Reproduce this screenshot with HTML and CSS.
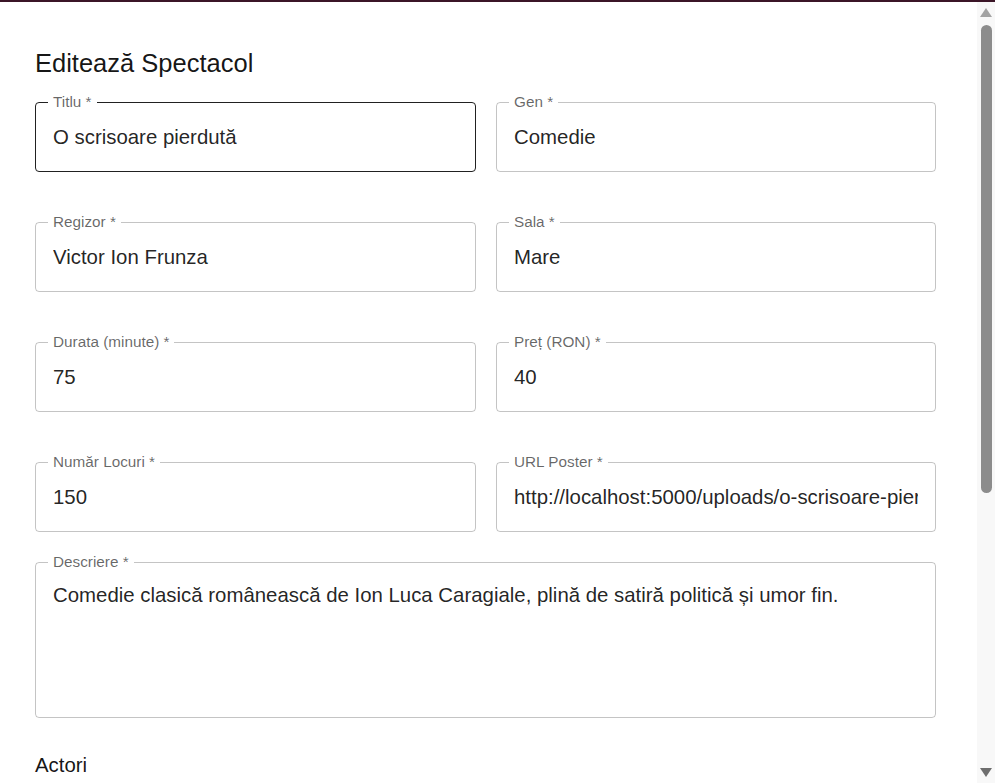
FILE: index.html
```html
<!DOCTYPE html>
<html lang="ro">
<head>
<meta charset="utf-8">
<title>Editează Spectacol</title>
<link rel="stylesheet" href="styles.css">
</head>
<body>
<div class="backdrop-strip"></div>
<div class="dialog">
  <div class="dialog-content">
    <h2 class="title">Editează Spectacol</h2>
    <div class="form-grid">
      <div class="field field-hover">
        <span class="label">Titlu *</span>
        <input class="input" type="text" value="O scrisoare pierdută">
      </div>
      <div class="field">
        <span class="label">Gen *</span>
        <input class="input" type="text" value="Comedie">
      </div>
      <div class="field">
        <span class="label">Regizor *</span>
        <input class="input" type="text" value="Victor Ion Frunza">
      </div>
      <div class="field">
        <span class="label">Sala *</span>
        <input class="input" type="text" value="Mare">
      </div>
      <div class="field">
        <span class="label">Durata (minute) *</span>
        <input class="input" type="text" value="75">
      </div>
      <div class="field">
        <span class="label">Preț (RON) *</span>
        <input class="input" type="text" value="40">
      </div>
      <div class="field">
        <span class="label">Număr Locuri *</span>
        <input class="input" type="text" value="150">
      </div>
      <div class="field">
        <span class="label">URL Poster *</span>
        <input class="input" type="text" value="http://localhost:5000/uploads/o-scrisoare-pierduta.jpg">
      </div>
    </div>
    <div class="field field-multi">
      <span class="label">Descriere *</span>
      <textarea class="textarea" rows="4">Comedie clasică românească de Ion Luca Caragiale, plină de satiră politică și umor fin.</textarea>
    </div>
    <h3 class="section">Actori</h3>
  </div>
  <div class="scrollbar">
    <div class="sb-btn"><span class="arrow-up"></span></div>
    <div class="sb-thumb"></div>
    <div class="sb-space"></div>
    <div class="sb-btn"><span class="arrow-down"></span></div>
  </div>
</div>
</body>
</html>
```
FILE: styles.css
```css
* { box-sizing: border-box; }
html, body {
  margin: 0;
  padding: 0;
  background: #ffffff;
  font-family: "Liberation Sans", Arial, sans-serif;
  color: rgba(0, 0, 0, 0.87);
  overflow: hidden;
}
.backdrop-strip {
  height: 2px;
  background: #3b1527;
}
.dialog {
  display: flex;
  height: 781px;
  background: #ffffff;
}
.dialog-content {
  flex: 1;
  overflow: hidden;
  padding: 45px 41px 0 35px;
}
.title {
  margin: 0;
  font-size: 25.5px;
  font-weight: normal;
  line-height: 32px;
  color: rgba(0, 0, 0, 0.92);
}
.form-grid {
  margin-top: 23px;
  display: grid;
  grid-template-columns: 441px 440px;
  column-gap: 20px;
  row-gap: 50px;
}
.field {
  position: relative;
  height: 70px;
  border: 1px solid rgba(0, 0, 0, 0.23);
  border-radius: 4px;
  display: flex;
  align-items: center;
  padding: 0 17px;
}
.field-hover {
  border-color: rgba(0, 0, 0, 0.87);
}
.field-multi {
  width: 901px;
  margin-top: 30px;
  height: 156px;
  display: block;
  padding: 18px 17px 0 17px;
}
.label {
  position: absolute;
  top: -9.5px;
  left: 12px;
  padding: 0 5px;
  background: #ffffff;
  font-size: 15.3px;
  line-height: 1;
  color: rgba(0, 0, 0, 0.6);
  white-space: nowrap;
}
.input {
  width: 100%;
  border: none;
  outline: none;
  padding: 0;
  margin: 0;
  background: transparent;
  font: inherit;
  font-size: 20.4px;
  color: rgba(0, 0, 0, 0.87);
}
.textarea {
  display: block;
  width: 100%;
  border: none;
  outline: none;
  padding: 0;
  margin: 0;
  resize: none;
  overflow: hidden;
  background: transparent;
  font: inherit;
  font-size: 20.4px;
  line-height: 29.3px;
  color: rgba(0, 0, 0, 0.87);
}
.section {
  margin: 31px 0 0 0;
  font-size: 20.4px;
  font-weight: normal;
  line-height: 32px;
  color: rgba(0, 0, 0, 0.92);
}
.scrollbar {
  width: 18px;
  flex: none;
  background: #f8f8f8;
  display: flex;
  flex-direction: column;
  align-items: center;
}
.sb-btn {
  height: 21px;
  width: 100%;
  display: flex;
  align-items: center;
  justify-content: center;
  flex: none;
}
.arrow-up {
  width: 0;
  height: 0;
  border-left: 6px solid transparent;
  border-right: 6px solid transparent;
  border-bottom: 9px solid #a3a3a3;
}
.arrow-down {
  width: 0;
  height: 0;
  border-left: 6px solid transparent;
  border-right: 6px solid transparent;
  border-top: 9px solid #6e6e6e;
}
.sb-thumb {
  margin-top: 2px;
  width: 11px;
  height: 468px;
  border-radius: 6px;
  background: #8c8c8c;
  flex: none;
}
.sb-space {
  flex: 1;
}
```
